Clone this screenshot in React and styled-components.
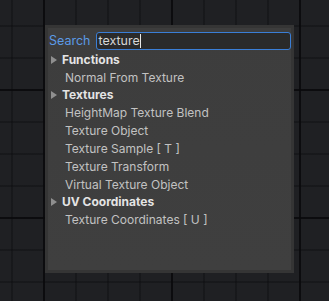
import React from "react";
import styled, { createGlobalStyle } from "styled-components";

const Global = createGlobalStyle`
  html, body { margin: 0; padding: 0; }
  body {
    width: 329px;
    height: 301px;
    overflow: hidden;
    background-color: #1f2023;
    background-image:
      linear-gradient(to right, rgba(8,8,10,0.75) 2px, transparent 2px),
      linear-gradient(to bottom, rgba(8,8,10,0.75) 2px, transparent 2px),
      linear-gradient(to right, rgba(10,10,12,0.35) 2px, transparent 2px),
      linear-gradient(to bottom, rgba(10,10,12,0.35) 2px, transparent 2px);
    background-size: 128px 128px, 128px 128px, 32px 32px, 32px 32px;
    background-position: 43px 0, 0 89px, 11px 0, 0 25px;
    font-family: Inter, "Noto Sans", sans-serif;
  }
`;

const Page = styled.div`
  box-sizing: border-box;
  padding: 25px 0 0 45px;
`;

const Panel = styled.div`
  box-sizing: border-box;
  width: 249px;
  height: 248px;
  border: 3px solid #353535;
  background: linear-gradient(180deg, #3d3d3d 0%, #3f3f3f 100%);
  padding: 3px 0 0 1px;
  display: flex;
  flex-direction: column;
`;

const SearchRow = styled.div`
  display: flex;
  align-items: center;
  gap: 6px;
  height: 19px;
`;

const Label = styled.span`
  color: #5b9ae6;
  font-size: 12.5px;
`;

const InputBox = styled.div`
  flex: 1;
  box-sizing: border-box;
  height: 18px;
  border: 1px solid #3a7ed6;
  border-radius: 3px;
  background: #2a2a2a;
  color: #d6d6d6;
  font-size: 12.5px;
  padding-left: 1px;
  display: flex;
  align-items: center;
`;

const Caret = styled.span`
  display: inline-block;
  width: 1px;
  height: 14px;
  background: #e8e8e8;
`;

const List = styled.div`
  display: flex;
  flex-direction: column;
  margin-top: 1px;
`;

const CategoryRow = styled.div`
  display: flex;
  align-items: center;
  gap: 5px;
  height: 17px;
  padding-left: 2px;
  color: #e4e4e4;
  font-weight: 700;
  font-size: 12px;
`;

const Item = styled.div`
  display: flex;
  align-items: center;
  height: 18px;
  padding-left: 16px;
  color: #c2c2c2;
  font-size: 12px;
`;

const Tri = () => (
  <svg width="6" height="8" viewBox="0 0 6 8">
    <path d="M0 0 L6 4 L0 8 Z" fill="#8f8f8f" />
  </svg>
);

const groups = [
  { name: "Functions", items: ["Normal From Texture"] },
  {
    name: "Textures",
    items: [
      "HeightMap Texture Blend",
      "Texture Object",
      "Texture Sample [ T ]",
      "Texture Transform",
      "Virtual Texture Object",
    ],
  },
  { name: "UV Coordinates", items: ["Texture Coordinates [ U ]"] },
];

export default function App() {
  return (
    <>
      <Global />
      <Page>
        <Panel>
          <SearchRow>
            <Label>Search</Label>
            <InputBox>
              texture
              <Caret />
            </InputBox>
          </SearchRow>
          <List>
            {groups.map((g) => (
              <React.Fragment key={g.name}>
                <CategoryRow>
                  <Tri />
                  {g.name}
                </CategoryRow>
                {g.items.map((it) => (
                  <Item key={it}>{it}</Item>
                ))}
              </React.Fragment>
            ))}
          </List>
        </Panel>
      </Page>
    </>
  );
}
